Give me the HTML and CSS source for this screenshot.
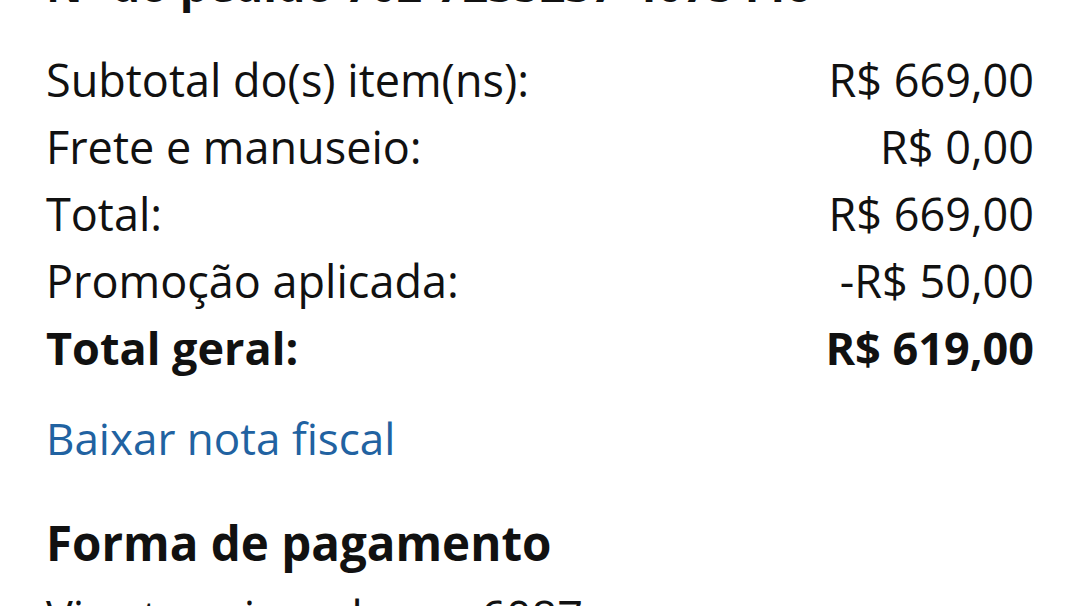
FILE: index.html
```html
<!DOCTYPE html>
<html lang="pt-BR">
<head>
  <meta charset="UTF-8" />
  <meta name="viewport" content="width=device-width, initial-scale=1.0" />
  <title>Detalhes do pedido</title>
  <link rel="stylesheet" href="styles.css">
</head>
<body>
  <div class="page">
    <p class="order-id">Nº do pedido 702-7235237-4075446</p>

    <div class="summary">
      <div class="row"><span>Subtotal do(s) item(ns):</span><span>R$ 669,00</span></div>
      <div class="row"><span>Frete e manuseio:</span><span>R$ 0,00</span></div>
      <div class="row"><span>Total:</span><span>R$ 669,00</span></div>
      <div class="row"><span>Promoção aplicada:</span><span>-R$ 50,00</span></div>
      <div class="row grand"><span>Total geral:</span><span>R$ 619,00</span></div>
    </div>

    <a class="invoice" href="#">Baixar nota fiscal</a>

    <h2>Forma de pagamento</h2>
    <p class="card">Visa terminando em 6087</p>
  </div>
</body>
</html>
```

FILE: styles.css
```css
body {
  margin: 0;
  padding: 0;
  background: #fff;
  color: #111;
  font-family: 'Open Sans', 'Noto Sans', sans-serif;
  overflow: hidden;
}

.page {
  padding: 0 43px 0 46px;
  font-size: 45px;
  line-height: 67px;
}

/* order number, scrolled mostly out of view */
.order-id {
  margin: -49px 0 0;
  font-weight: 700;
}

.summary {
  margin-top: 28px;
}

.row {
  display: flex;
  justify-content: space-between;
}

.row.grand {
  font-weight: 700;
}

.invoice {
  display: block;
  margin-top: 24px;
  font-size: 44px;
  color: #2162a1;
  text-decoration: none;
}

h2 {
  margin: 37px 0 0;
  font-size: 47.5px;
  line-height: 67px;
  font-weight: 700;
}

.card {
  margin: 7px 0 0;
}
```
